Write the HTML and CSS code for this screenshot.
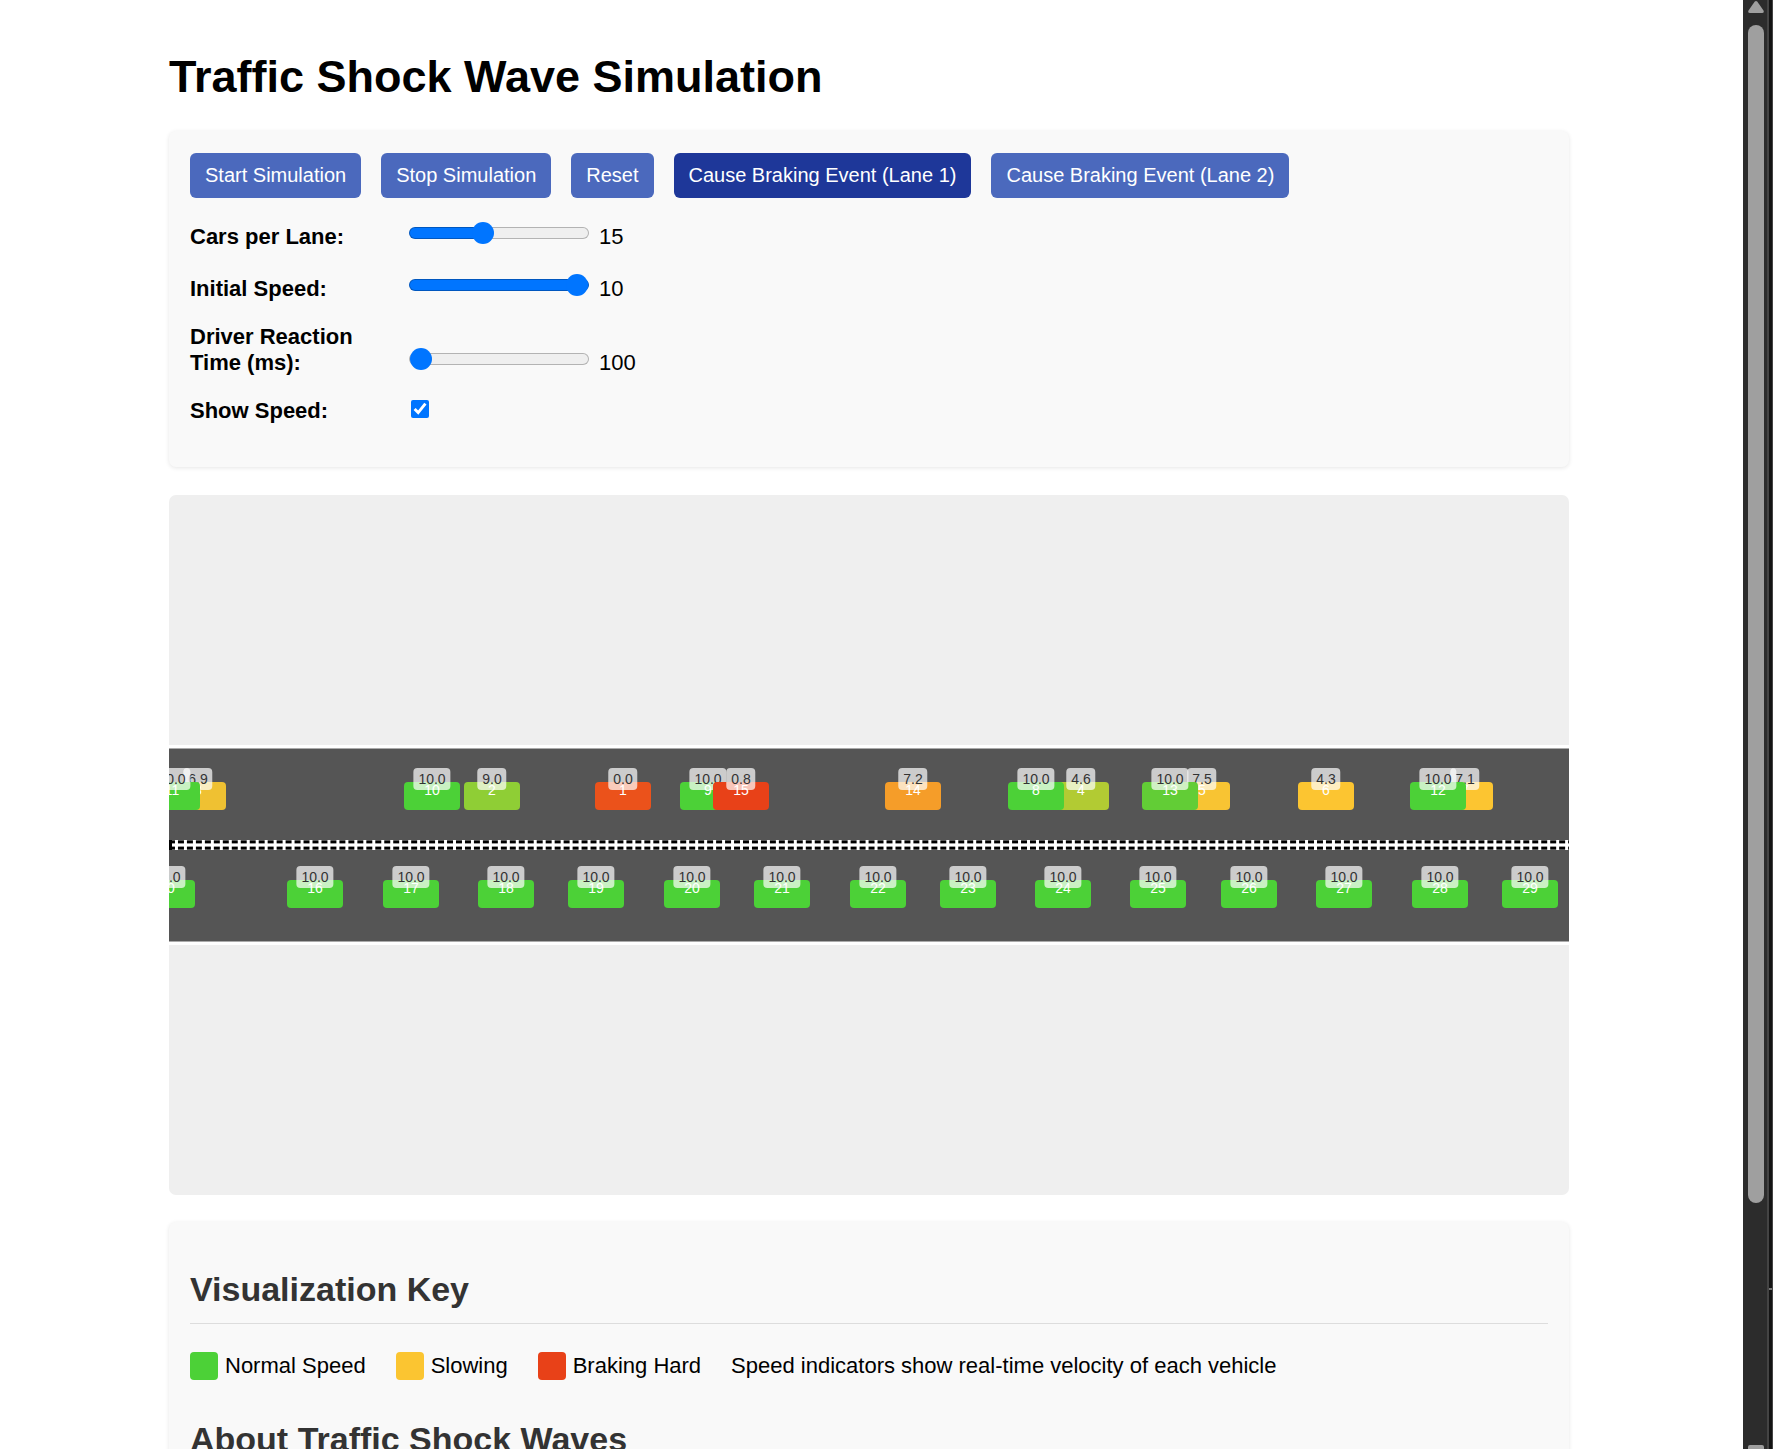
FILE: index.html
```html
<!DOCTYPE html>
<html lang="en">
<head>
<meta charset="utf-8">
<title>Traffic Shock Wave Simulation</title>
<link rel="stylesheet" href="styles.css">
</head>
<body>
<main class="page">
  <div class="container">
    <h1 class="title">Traffic Shock Wave Simulation</h1>

    <section class="panel controls">
      <div class="buttons">
        <button class="btn" type="button">Start Simulation</button>
        <button class="btn" type="button">Stop Simulation</button>
        <button class="btn" type="button">Reset</button>
        <button class="btn btn-active" type="button">Cause Braking Event (Lane 1)</button>
        <button class="btn" type="button">Cause Braking Event (Lane 2)</button>
      </div>
      <div class="fields">
        <div class="field">
          <label class="field-label" for="cars">Cars per Lane:</label>
          <input class="slider" id="cars" type="range" min="5" max="30" value="15" style="--fill: 40%">
          <output for="cars">15</output>
        </div>
        <div class="field">
          <label class="field-label" for="speed">Initial Speed:</label>
          <input class="slider" id="speed" type="range" min="1" max="10" value="10" style="--fill: 100%">
          <output for="speed">10</output>
        </div>
        <div class="field">
          <label class="field-label" for="reaction">Driver Reaction Time (ms):</label>
          <input class="slider" id="reaction" type="range" min="100" max="2000" value="100" style="--fill: 0%">
          <output for="reaction">100</output>
        </div>
        <div class="field field-check">
          <label class="field-label" for="show-speed">Show Speed:</label>
          <input class="check" id="show-speed" type="checkbox" checked>
        </div>
      </div>
    </section>

    <section class="scene">
      <div class="road">
        <div class="lane">
          <div class="car" style="left: 426px; background: #eb521b">1<span class="speed">0.0</span></div>
          <div class="car" style="left: 295px; background: #8fce35">2<span class="speed">9.0</span></div>
          <div class="car" style="left: 1px; background: #efc132">3<span class="speed">6.9</span></div>
          <div class="car" style="left: 884px; background: #b2cb33">4<span class="speed">4.6</span></div>
          <div class="car" style="left: 1005px; background: #f8c433">5<span class="speed">7.5</span></div>
          <div class="car" style="left: 1129px; background: #fcc531">6<span class="speed">4.3</span></div>
          <div class="car" style="left: 1268px; background: #fcc531">7<span class="speed">7.1</span></div>
          <div class="car" style="left: 839px">8<span class="speed">10.0</span></div>
          <div class="car" style="left: 511px">9<span class="speed">10.0</span></div>
          <div class="car" style="left: 235px">10<span class="speed">10.0</span></div>
          <div class="car" style="left: -25px">11<span class="speed">10.0</span></div>
          <div class="car" style="left: 1241px">12<span class="speed">10.0</span></div>
          <div class="car" style="left: 973px; background: #62cd36">13<span class="speed">10.0</span></div>
          <div class="car" style="left: 716px; background: #f59d29">14<span class="speed">7.2</span></div>
          <div class="car" style="left: 544px; background: #e84118">15<span class="speed">0.8</span></div>
        </div>
        <div class="divider"></div>
        <div class="lane">
          <div class="car" style="left: 118px">16<span class="speed">10.0</span></div>
          <div class="car" style="left: 214px">17<span class="speed">10.0</span></div>
          <div class="car" style="left: 309px">18<span class="speed">10.0</span></div>
          <div class="car" style="left: 399px">19<span class="speed">10.0</span></div>
          <div class="car" style="left: 495px">20<span class="speed">10.0</span></div>
          <div class="car" style="left: 585px">21<span class="speed">10.0</span></div>
          <div class="car" style="left: 681px">22<span class="speed">10.0</span></div>
          <div class="car" style="left: 771px">23<span class="speed">10.0</span></div>
          <div class="car" style="left: 866px">24<span class="speed">10.0</span></div>
          <div class="car" style="left: 961px">25<span class="speed">10.0</span></div>
          <div class="car" style="left: 1052px">26<span class="speed">10.0</span></div>
          <div class="car" style="left: 1147px">27<span class="speed">10.0</span></div>
          <div class="car" style="left: 1243px">28<span class="speed">10.0</span></div>
          <div class="car" style="left: 1333px">29<span class="speed">10.0</span></div>
          <div class="car" style="left: -30px">30<span class="speed">10.0</span></div>
        </div>
      </div>
    </section>

    <section class="panel info">
      <h2 class="heading">Visualization Key</h2>
      <ul class="legend">
        <li class="legend-item"><span class="swatch swatch-normal"></span>Normal Speed</li>
        <li class="legend-item"><span class="swatch swatch-slow"></span>Slowing</li>
        <li class="legend-item"><span class="swatch swatch-brake"></span>Braking Hard</li>
        <li class="legend-item">Speed indicators show real-time velocity of each vehicle</li>
      </ul>
      <h2 class="heading">About Traffic Shock Waves</h2>
    </section>
  </div>
</main>
<div class="scrollbar" aria-hidden="true">
  <svg class="arrow" width="16" height="12" viewBox="0 0 16 12"><path d="M6.6 0.8Q8-.6 9.400 .8L15.500 9.500Q16.500 12 14 12H2Q-.5 12 .5 9.500Z" fill="#9f9f9f"/></svg>
  <div class="thumb"></div>
  <div class="rest"></div>
  <div class="arrow-end"></div>
</div>
<div class="edge" aria-hidden="true"><div class="edge-mark"></div></div>
</body>
</html>
```
FILE: styles.css
```css
* {
  box-sizing: border-box;
}

body {
  margin: 0;
  height: 100vh;
  display: flex;
  overflow: hidden;
  background: #fff;
  color: #000;
  font-family: Arial, "Liberation Sans", sans-serif;
  font-size: 22px;
  line-height: 26px;
}

.page {
  flex: 1;
  min-width: 0;
  overflow: hidden;
  padding: 51px 26px 0 21px;
}

.container {
  max-width: 1400px;
  margin: 0 auto;
}

.title {
  margin: 0 0 28px;
  font-size: 45px;
  line-height: 52px;
}

.panel {
  background: #f9f9f9;
  border-radius: 7px;
  box-shadow: 0 1px 4px rgba(0, 0, 0, 0.1);
}

.controls {
  padding: 22px 21px 43px;
}

.buttons {
  display: flex;
  flex-wrap: wrap;
  gap: 20px;
}

.btn {
  height: 45px;
  padding: 0 15px;
  border: 0;
  border-radius: 6px;
  background: #4b69bd;
  color: #fff;
  font-family: inherit;
  font-size: 20px;
}

.btn-active {
  background: #1e3799;
}

.fields {
  display: flex;
  flex-direction: column;
  gap: 22px;
  margin-top: 22px;
}

.field {
  display: flex;
  align-items: flex-end;
  min-height: 30px;
}

.field-check {
  min-height: 26px;
}

.field-label {
  width: 219px;
  padding-right: 40px;
  font-weight: bold;
}

.slider {
  appearance: none;
  width: 180px;
  height: 22px;
  margin: 0 10px 6px 0;
  background: transparent;
}

.slider::-webkit-slider-runnable-track {
  height: 12px;
  border: 1px solid rgba(0, 0, 0, 0.25);
  border-radius: 6px;
  background: linear-gradient(to right, #0075ff var(--fill), #efefef var(--fill)) border-box;
}

.slider::-webkit-slider-thumb {
  appearance: none;
  position: relative;
  width: 22px;
  height: 22px;
  margin-top: -6px;
  border-radius: 50%;
  background: #0075ff;
}

.check {
  width: 18px;
  height: 18px;
  margin: 0 0 6px 2px;
  accent-color: #0075ff;
}

.scene {
  display: flex;
  align-items: center;
  height: 700px;
  margin: 28px 0 27px;
  border-radius: 7px;
  background: #efefef;
  overflow: hidden;
}

.road {
  flex: 1;
  display: flex;
  flex-direction: column;
  height: 200px;
  border: solid #fff;
  border-width: 3px 0;
  background: #555;
  box-shadow: inset 0 1px #aaa, inset 0 -1px #aaa;
}

.lane {
  position: relative;
  flex: 1;
}

/* Black rails with a white centre line, crossed by evenly spaced white ticks */
.divider {
  height: 10px;
  background:
    linear-gradient(#000, #000) left / 3px 10px no-repeat,
    linear-gradient(to right, transparent 6px, #fff 6px) left / 9px 10px round,
    linear-gradient(#555 1px, #000 1px 3px, #999 3px 4px, #fff 4px 6px, #999 6px 7px, #000 7px 9px, #555 9px);
}

.car {
  position: absolute;
  top: 34px;
  width: 56px;
  height: 28px;
  border-radius: 4px;
  background: #4cd137;
  color: #fff;
  font-size: 14px;
  line-height: 16px;
  text-align: center;
}

.lane:last-child .car {
  top: 30px;
}

.speed {
  position: absolute;
  top: -14px;
  left: 50%;
  transform: translateX(-50%);
  padding: 3px 5px;
  border-radius: 4px;
  background: rgba(255, 255, 255, 0.7);
  color: #333;
}

.info {
  padding: 47px 21px;
}

.heading {
  margin: 0 0 28px;
  padding-bottom: 14px;
  border-bottom: 1px solid #ddd;
  color: #333;
  font-size: 34px;
  line-height: 40px;
}

.legend {
  display: flex;
  flex-wrap: wrap;
  gap: 30px;
  margin: 0 0 39px;
  padding: 0;
  list-style: none;
}

.legend-item {
  display: flex;
  align-items: center;
  gap: 7px;
}

.swatch {
  width: 28px;
  height: 28px;
  border-radius: 4px;
}

.swatch-normal {
  background: #4cd137;
}

.swatch-slow {
  background: #fbc531;
}

.swatch-brake {
  background: #e84118;
}

.scrollbar {
  display: flex;
  flex-direction: column;
  width: 24px;
  padding: 1px 3px 0 5px;
  background: #2c2c2c;
}

.arrow {
  flex: none;
}

.thumb {
  flex: 1178;
  margin-top: 12px;
  border-radius: 8px;
  background: #9f9f9f;
}

.rest {
  flex: 242;
}

.arrow-end {
  height: 4px;
  border-radius: 2px 2px 0 0;
  background: #9f9f9f;
}

.edge {
  display: flex;
  flex-direction: column;
  justify-content: flex-end;
  width: 6px;
  padding-bottom: 159px;
  border: solid #444;
  border-width: 0 1px 0 2px;
  background: #141414;
}

.edge-mark {
  height: 2px;
  background: #777;
}
```
